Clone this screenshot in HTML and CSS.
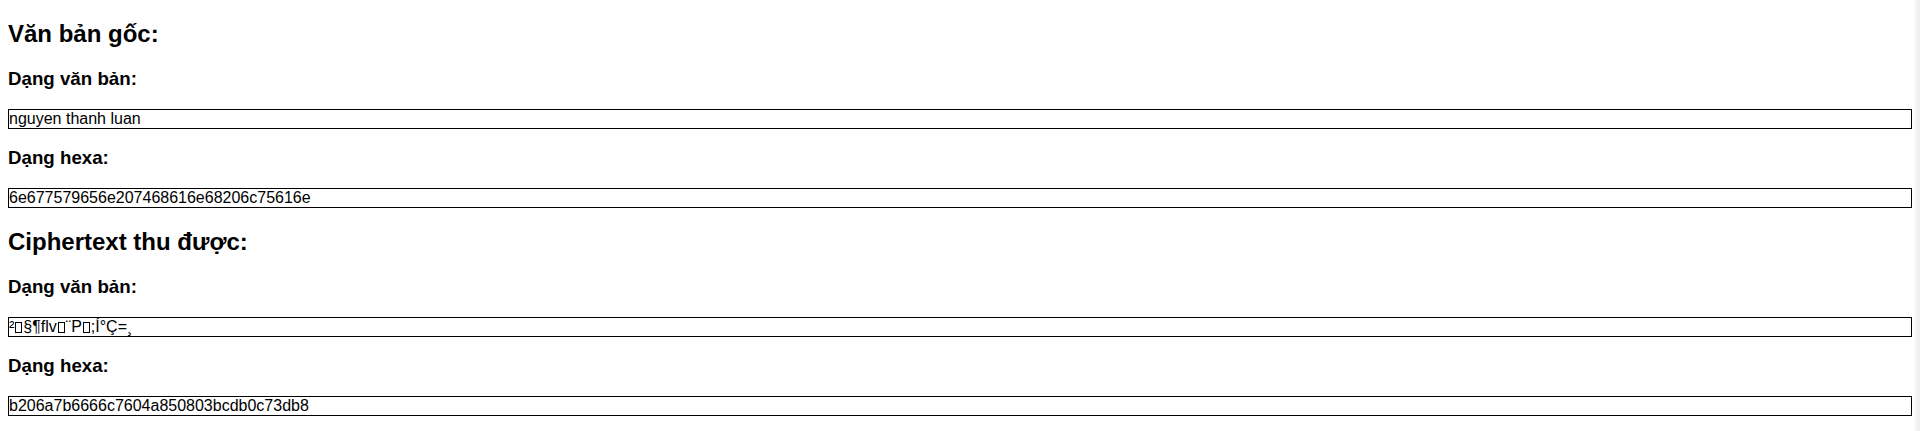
FILE: index.html
```html
<!DOCTYPE html>
<html lang="vi">
<head>
<meta charset="utf-8">
<title>Mã hóa</title>
<link rel="stylesheet" href="styles.css">
</head>
<body>
<main class="page">
<h2 class="title">Văn bản gốc:</h2>
<h3 class="label">Dạng văn bản:</h3>
<div class="field">nguyen thanh luan</div>
<h3 class="label">Dạng hexa:</h3>
<div class="field">6e677579656e207468616e68206c75616e</div>
<h2 class="title">Ciphertext thu được:</h2>
<h3 class="label">Dạng văn bản:</h3>
<div class="field">²<span class="nd"></span>§¶flv<span class="nd"></span>¨P<span class="nd"></span>;Í°Ç=¸</div>
<h3 class="label">Dạng hexa:</h3>
<div class="field">b206a7b6666c7604a850803bcdb0c73db8</div>
</main>
<div class="edge"></div>
</body>
</html>
```
FILE: styles.css
```css
html, body {
  background: #ffffff;
}
body {
  margin: 0;
  padding: 0;
  font-family: "Liberation Sans", Arial, sans-serif;
  color: #000000;
}
.page {
  display: flow-root;
  padding: 20px 8px 0;
}
.title {
  font-size: 24px;
  font-weight: bold;
  line-height: 28px;
  margin: 19.92px 0;
}
.page > .title:first-child {
  margin-top: 0;
}
.label {
  font-size: 18.72px;
  font-weight: bold;
  line-height: 22px;
  margin: 18.72px 0;
}
.field {
  border: 1px solid #000000;
  height: 18px;
  line-height: 18px;
  font-size: 16px;
  padding: 0;
  white-space: pre;
  overflow: hidden;
}
.nd {
  display: inline-block;
  width: 7px;
  height: 11px;
  border: 1px solid #000000;
  box-sizing: border-box;
  margin: 0 1px;
  vertical-align: -1px;
}
.edge {
  position: fixed;
  top: 0;
  right: 0;
  width: 7px;
  height: 100%;
  background: linear-gradient(to right, #ffffff, #f1f1f1 60%, #efefef);
}
```
